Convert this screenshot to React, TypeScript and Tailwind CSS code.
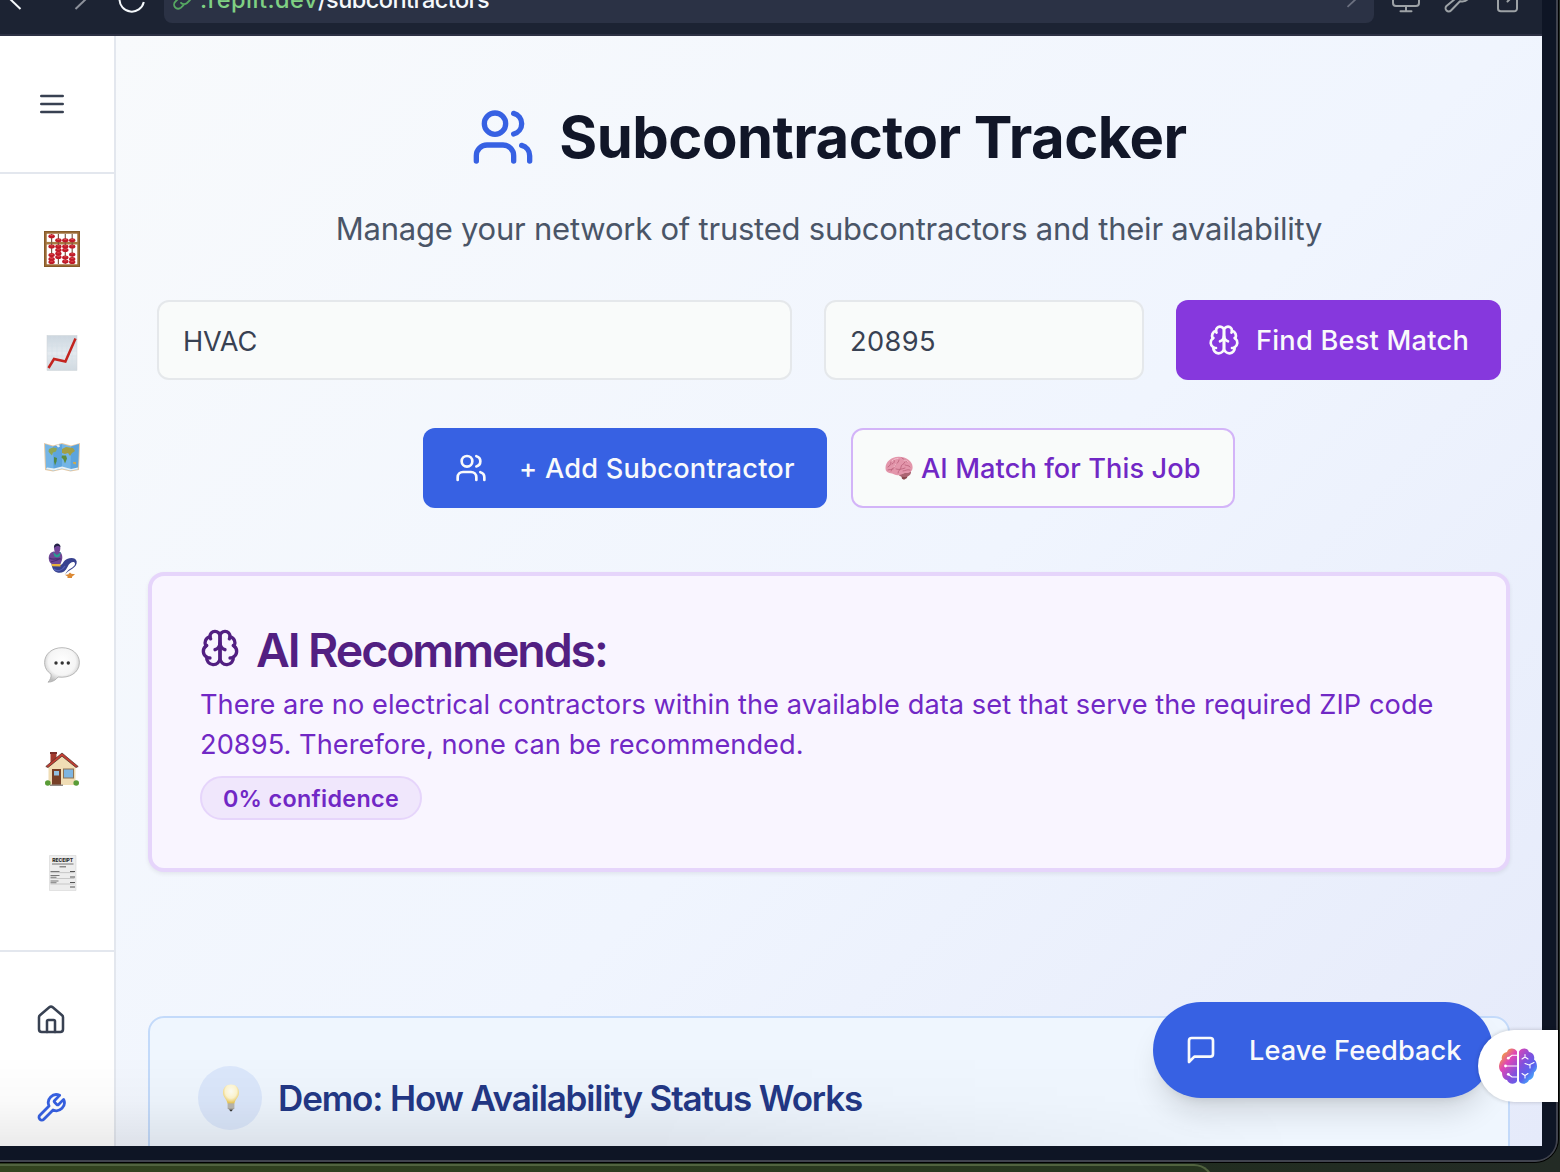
import React from "react";

type IconProps = { className?: string; stroke?: number };

function Icon({ className = "", stroke = 2, children }: IconProps & { children: React.ReactNode }) {
  return (
    <svg
      viewBox="0 0 24 24"
      fill="none"
      stroke="currentColor"
      strokeWidth={stroke}
      strokeLinecap="round"
      strokeLinejoin="round"
      className={`shrink-0 ${className}`}
    >
      {children}
    </svg>
  );
}

const UsersIcon = (p: IconProps) => (
  <Icon {...p}>
    <path d="M16 21v-2a4 4 0 0 0-4-4H6a4 4 0 0 0-4 4v2" />
    <circle cx="9" cy="7" r="4" />
    <path d="M22 21v-2a4 4 0 0 0-3-3.87" />
    <path d="M16 3.13a4 4 0 0 1 0 7.75" />
  </Icon>
);

const BrainIcon = (p: IconProps) => (
  <Icon {...p}>
    <path d="M12 5a3 3 0 1 0-5.997.125 4 4 0 0 0-2.526 5.77 4 4 0 0 0 .556 6.588A4 4 0 1 0 12 18Z" />
    <path d="M12 5a3 3 0 1 1 5.997.125 4 4 0 0 1 2.526 5.77 4 4 0 0 1-.556 6.588A4 4 0 1 1 12 18Z" />
    <path d="M15 13a4.5 4.5 0 0 1-3-4 4.5 4.5 0 0 1-3 4" />
    <path d="M17.599 6.5a3 3 0 0 0 .399-1.375" />
    <path d="M6.003 5.125A3 3 0 0 0 6.401 6.5" />
    <path d="M3.477 10.896a4 4 0 0 1 .585-.396" />
    <path d="M19.938 10.5a4 4 0 0 1 .585.396" />
    <path d="M6 18a4 4 0 0 1-1.967-.516" />
    <path d="M19.967 17.484A4 4 0 0 1 18 18" />
  </Icon>
);

const MenuIcon = (p: IconProps) => (
  <Icon {...p}>
    <path d="M4 6h16M4 12h16M4 18h16" />
  </Icon>
);

const HouseIcon = (p: IconProps) => (
  <Icon {...p}>
    <path d="M15 21v-8a1 1 0 0 0-1-1h-4a1 1 0 0 0-1 1v8" />
    <path d="M3 10a2 2 0 0 1 .709-1.528l7-5.999a2 2 0 0 1 2.582 0l7 5.999A2 2 0 0 1 21 10v9a2 2 0 0 1-2 2H5a2 2 0 0 1-2-2z" />
  </Icon>
);

const WrenchIcon = (p: IconProps) => (
  <Icon {...p}>
    <path d="M14.7 6.3a1 1 0 0 0 0 1.4l1.6 1.6a1 1 0 0 0 1.4 0l3.77-3.77a6 6 0 0 1-7.94 7.94l-6.91 6.91a2.12 2.12 0 0 1-3-3l6.91-6.91a6 6 0 0 1 7.94-7.94l-3.76 3.76z" />
  </Icon>
);

const MessageIcon = (p: IconProps) => (
  <Icon {...p}>
    <path d="M21 15a2 2 0 0 1-2 2H7l-4 4V5a2 2 0 0 1 2-2h14a2 2 0 0 1 2 2z" />
  </Icon>
);

/* Sidebar pictograms, all on a 36 unit canvas */

const abacusRods = [7.6, 14.4, 21.3, 28.2];
const abacusBeads: number[][] = [
  [5.2, 15.5, 24, 28, 31],
  [9.2, 15.5, 19, 22.5, 26],
  [9.2, 15.5, 19, 26.5, 30.5],
  [9.2, 15.5, 23.5, 28, 31],
];

const Abacus = () => (
  <svg viewBox="0 0 36 36" className="size-9">
    <rect x="1.3" y="1.3" width="33.4" height="33.4" fill="#fff" stroke="#9a6a35" strokeWidth="2.8" />
    <path d="M0.4 0.4h35.2v35.2H0.4z" fill="none" stroke="#7b5023" strokeWidth=".7" />
    <path d="M2 12.2h32" stroke="#a87a42" strokeWidth="2.6" />
    {abacusRods.map((x, i) => (
      <g key={x}>
        <path d={`M${x} 3v30`} stroke="#7e5a46" strokeWidth="1.2" />
        {abacusBeads[i].map((y) => (
          <g key={y}>
            <ellipse cx={x} cy={y} rx="3.2" ry="2" fill="#bf1a28" />
            <ellipse cx={x} cy={y - 0.7} rx="1.6" ry=".5" fill="#e04a4e" />
          </g>
        ))}
      </g>
    ))}
  </svg>
);

const Chart = () => (
  <svg viewBox="0 0 36 36" className="size-9">
    <defs>
      <linearGradient id="paper" x1="0" y1="0" x2="0" y2="1">
        <stop offset="0" stopColor="#ccd6df" />
        <stop offset=".5" stopColor="#e4eaef" />
        <stop offset="1" stopColor="#d0d9e0" />
      </linearGradient>
    </defs>
    <rect x="3" y=".5" width="30" height="35" fill="url(#paper)" stroke="#cdd3d8" strokeWidth=".5" />
    <path d="M8 1v34M13 1v34M18 1v34M23 1v34M28 1v34M3 6h30M3 11h30M3 16h30M3 21h30M3 26h30M3 31h30" stroke="#d3dce4" strokeWidth=".5" />
    <path d="M4.500 33 10 24l11.400 2.500L31.500 3.500" fill="none" stroke="#c3241f" strokeWidth="2.500" />
  </svg>
);

const WorldMap = () => (
  <svg viewBox="0 0 36 36" className="size-9">
    <path d="M0 4l9 2.500L18 4l9 2.500L36 4l-1 27-8.500 1.500-8.500-2-9 2L1 31z" fill="#e4c7a2" />
    <path d="M1 5l8 2.500L18 5l9 2.500L35 5l-1 25-7.500 1.500-8.500-2-8.500 2L2 30z" fill="#74b5e6" />
    <path d="M9 7.500L18 5v24.500l-8.500 2zM27 7.500L35 5l-1 25-7.500 1.500z" fill="#4f9ad6" opacity=".6" />
    <path d="M5 10l4-1.500 4 1-1 3-3 1-1 3-2-2-1.500-2z" fill="#8fa653" />
    <path d="M10 18l3 1-.5 3.500-1.500 4-1-4z" fill="#4f8845" />
    <path d="M18 10l4-2 7 1 2 3-3 2-2 3-2-3-3 1-3-1z" fill="#a39f45" />
    <path d="M18 16.500l4 0 1 3-2 5-1.500-4-2-2z" fill="#5d8d3d" />
    <path d="M29 23l3 0 0 2.500-3-1z" fill="#cda950" />
    <path d="M12 6l3-.5 1 2-2 1zM3 28.500l7 1 8-2 9 2.500 7-1.500-.3 1.700-7.200 1.300-8.500-2-8.500 2L2 30z" fill="#e8f1f5" />
  </svg>
);

const Genie = () => (
  <svg viewBox="0 0 36 36" className="size-9">
    <path d="M7.500 21C8.500 32 20 32.500 23.500 24c2-5 7.500-6.500 7.500-3 0 3.500-8 5-9.700 10.200C24 27 33.500 25 32.700 18.500 31.500 13 22.500 14.500 19.500 19c-1 1.800-2 3-3.500 3z" fill="#38428f" />
    <path d="M10 26c3 3 8 2 11-3" fill="none" stroke="#5663b8" strokeWidth="1.200" />
    <path d="M7.500 20l9 .5v3l-8.500-.3z" fill="#e9b23c" />
    <path d="M9.500 8.500c-3.500.8-5 4-4.700 7.500.2 3 2 4.500 3.200 5h8.500c1-3 2.500-5 1.500-9-.6-2.500-2-3.500-4-3.500z" fill="#6f4796" />
    <path d="M9 9l4 3 4-3-1.500 4.500-2.500 1-2.500-1z" fill="#2a9a93" />
    <path d="M5.500 15c3 2.500 7.500 0 11.500 1M7 19c3-1.500 5-.5 9-3.500" fill="none" stroke="#4b2d74" strokeWidth="1.200" />
    <ellipse cx="13.200" cy="5.600" rx="3.100" ry="4.200" fill="#72459a" />
    <path d="M10 5c-.8-6 7-6 6.500-.5-1-2-4-2.300-6.500.5z" fill="#252348" />
    <path d="M20.500 31.500c3 .8 4-.7 6-.7s3 .2 4.500.5l-3 2.400h-4zM26 29.500l1.500 1.500h-3zM23.500 33.800h4.500v1.200h-4.500z" fill="#dc8a35" />
  </svg>
);

const Speech = () => (
  <svg viewBox="0 0 36 36" className="size-9">
    <defs>
      <radialGradient id="bubble" cx=".5" cy=".4" r=".6">
        <stop offset="0" stopColor="#fff" />
        <stop offset=".65" stopColor="#f5f5f5" />
        <stop offset="1" stopColor="#bdbdbd" />
      </radialGradient>
    </defs>
    <path d="M18 .7C8 .7.6 7 .6 15.500c0 5 2.400 9 6.400 11.500.5 3-.8 6-3 8.200 4 0 8-2.200 10-5.200 11 1.500 21.400-4 21.400-14.500C35.400 7 28 .7 18 .7z" fill="url(#bubble)" stroke="#a9a9a9" strokeWidth=".8" />
    <g fill="#333">
      <circle cx="12" cy="16" r="1.700" />
      <circle cx="18.200" cy="16" r="1.700" />
      <circle cx="24.300" cy="16" r="1.700" />
    </g>
  </svg>
);

const Cottage = () => (
  <svg viewBox="0 0 36 36" className="size-9">
    <rect x="6.500" y="1" width="6" height="13" fill="#a2392d" />
    <path d="M6 1h7v2H6z" fill="#7c2d28" />
    <path d="M4.500 16L18 3.500 31.500 16v18h-27z" fill="#f0ddb5" />
    <path d="M1.800 15.500L18 2l16.200 13.500-2.200 1L18 5.200 4 16.500z" fill="#c53d32" stroke="#57352c" strokeWidth=".8" />
    <rect x="8" y="18" width="9" height="16" fill="#774027" />
    <rect x="10" y="20" width="5" height="4.500" fill="#92c1e2" />
    <rect x="19.500" y="18" width="10" height="9" fill="#7eb5e1" stroke="#8d7355" strokeWidth="1" />
    <path d="M6 33.500h13V35H6z" fill="#938d88" />
    <circle cx="3.800" cy="32" r="2.800" fill="#5a9c37" />
    <circle cx="32.200" cy="32" r="2.800" fill="#5a9c37" />
  </svg>
);

const Receipt = () => (
  <svg viewBox="0 0 36 36" className="size-9">
    <path d="M5.500.5h26.500v35H5.500z" fill="#ededed" stroke="#cfcfcf" strokeWidth=".5" />
    <text x="18.700" y="7.200" textAnchor="middle" fontSize="5.400" fontWeight="800" textLength="21" lengthAdjust="spacingAndGlyphs" fontFamily="Inter, sans-serif" fill="#2a2a2a">RECEIPT</text>
    <path d="M8 9h21.500" stroke="#555" strokeWidth=".8" />
    <path d="M15.500 11.800h6.500" stroke="#666" strokeWidth="1.100" />
    <path d="M6.500 16.500h9M6.500 20.500h9M6.500 22.300h6M6.500 26h8M6.500 27.800h6" stroke="#777" strokeWidth="1.100" />
    <path d="M26 16.500h5M26 22h5M26 27.500h5M26 32h5" stroke="#555" strokeWidth="1.200" />
    <path d="M6.500 17.600h24M6.500 23.500h24M6.500 29h24" stroke="#a3a3a3" strokeWidth=".5" />
  </svg>
);

const Bulb = () => (
  <svg viewBox="0 0 20 30" className="h-[30px] w-5">
    <defs>
      <radialGradient id="glow" cx=".5" cy=".35" r=".6">
        <stop offset="0" stopColor="#fffef5" />
        <stop offset=".6" stopColor="#fff6cf" />
        <stop offset="1" stopColor="#ebc95c" />
      </radialGradient>
    </defs>
    <path d="M10 1.500C5 1.500 2 5 2 9.500c0 5 4 6.500 4.600 11.300h6.800C14 16 18 14.500 18 9.500c0-4.500-3-8-8-8z" fill="url(#glow)" />
    <path d="M6.700 20.500h6.600v4.700l-1.300 1.500H8l-1.300-1.500z" fill="#aaa69d" />
    <path d="M6.700 22h6.600M6.700 24h6.600" stroke="#d9d6cd" strokeWidth=".7" />
    <path d="M8.200 26.500h3.600l-1 1.700H9.200z" fill="#3d3d3d" />
  </svg>
);

const PinkBrain = () => (
  <svg viewBox="0 0 28 24" className="h-6 w-7 shrink-0">
    <path d="M16 19l7-2-1 5-3 1.700-2-1z" fill="#8a4a50" />
    <path d="M13 18c4-1 10-1 13-3 .5 4-3 6-7 6-3 0-5-1-6-3z" fill="#ab6572" />
    <path d="M.5 12C.5 6 6 1 13.500.8 21 .6 27.500 5 27.600 11c.1 4-2.600 6-6.600 6-3 0-4 2-8 2.200-3 .1-4-1.200-6-1.700C3 16.800.500 16 .500 12z" fill="#e396ab" />
    <path d="M3 11c2-1 3-3 3-5M6 15c0-3 3-2 4-5s3-2 4-6M9 4c1 2 0 3-2 4M13 17c0-3 3-3 3-6s3-2 4-5M17 2c1 2 4 1 5 4M11 13c3 1 6 0 9-1M20 9c2 1 4 0 5 2M18 15c2 0 4-2 7-1M3 14c2 0 3-1 5-1" fill="none" stroke="#b96078" strokeWidth=".8" strokeLinecap="round" />
    <path d="M7 5c2-2 4-2.500 6-2.500M19 4c2 0 3 1 4 2M9 11c1-1 1-2 2-3" fill="none" stroke="#f4bfcc" strokeWidth="1" strokeLinecap="round" />
  </svg>
);

const NeonBrain = () => (
  <svg viewBox="0 0 38 36" className="h-9 w-[38px]">
    <defs>
      <linearGradient id="neon" x1="3" y1="5" x2="35" y2="31" gradientUnits="userSpaceOnUse">
        <stop offset="0" stopColor="#f2a23c" />
        <stop offset=".24" stopColor="#e046b4" />
        <stop offset=".55" stopColor="#8450dc" />
        <stop offset=".78" stopColor="#5a62ee" />
        <stop offset="1" stopColor="#44b4fb" />
      </linearGradient>
    </defs>
    <path d="M18 3.500C16-.5 9-.5 8 4 4 4.500 2 8 3 11.500.5 13 0 18 0 18.500c0 3 1.500 5 3 6C3 29 5 31.500 8 32c1.500 4.500 8.500 5 10 1z" fill="url(#neon)" />
    <path d="M20 3.500C22-.5 29-.5 30 4c4 .5 6 4 5 7.500 2.500 1.500 3 5.500 3 7 0 3-1.500 5-3 6 0 4.500-2 7-5 7.500-1.500 4.500-8.500 5-10 1z" fill="url(#neon)" />
    <g fill="none" stroke="#fff" strokeWidth="1.100" strokeLinecap="round">
      <path d="M18 7.300h-5L9.500 10M18 18H7M18 29h-5l-3.500-2.500" />
      <path d="M23 11l3-2 3 2M26 9V6.500M26 15.500l4 1.500 5-2.500M31 17v3M23 25.500l3 2 3-2M26 27.500V30" />
    </g>
    <circle cx="9.300" cy="10.200" r="1.400" fill="#fff" />
    <circle cx="6.500" cy="18" r="1.400" fill="#fff" />
    <circle cx="9.300" cy="26.300" r="1.400" fill="#fff" />
  </svg>
);

const navItems = [Abacus, Chart, WorldMap, Genie, Speech, Cottage, Receipt];

function BrowserBar() {
  return (
    <header className="flex h-9 shrink-0 items-start border-b-2 border-[#2d3144] bg-[#1c2333]">
      <svg viewBox="0 0 164 34" className="h-[34px] w-[164px] shrink-0" fill="none" strokeWidth="2">
        <path d="M9 -2 20.500 9" stroke="#f5f9fc" />
        <path d="M87 -2 75.500 9" stroke="#8d919b" />
        <path d="M119.500 -1a12.300 12.300 0 0 0 24.300 3" stroke="#f5f9fc" />
      </svg>
      <div className="flex h-[23px] w-[1210px] shrink-0 items-start justify-between overflow-hidden rounded-b-lg bg-[#2b3245]">
        <div className="flex items-start">
          <svg viewBox="0 0 36 23" className="h-[23px] w-9" fill="none" stroke="#56a862" strokeWidth="1.800" strokeLinecap="round">
            <path d="M15.500 -2.500 11.500 1.500a4.100 4.100 0 0 0 5.500 6.200l2.500-2.500M17 2.800a4.200 4.200 0 0 0 6 .2L26 0" />
          </svg>
          <span className="-mt-[14px] whitespace-nowrap text-[23.500px]/[28px] font-medium tracking-[-0.550px] text-[#f5f9fc]">
            <span className="tracking-[0.500px] text-[#7fd083]">.replit.dev</span>/subcontractors
          </span>
        </div>
        <svg viewBox="0 0 30 23" className="h-[23px] w-[30px]" fill="none" stroke="#6c7180" strokeWidth="1.800">
          <path d="M12 -1 3.500 6.800" />
        </svg>
      </div>
      <svg viewBox="0 0 168 34" className="h-[34px] w-[168px]" fill="none" stroke="#9da2a6" strokeWidth="2" strokeLinecap="round" strokeLinejoin="round">
        <path d="M19 -3v6a3 3 0 0 0 3 3h20a3 3 0 0 0 3-3v-6M32 6.500v4.500M26.500 11.300h11" />
        <path d="M81 -1 72.500 6a3 3 0 0 0 4.500 4.500L86 1.200c4 .8 7-.5 8.500-3" />
        <path d="M124 -3V8.500a2.800 2.800 0 0 0 2.800 2.800h13.400a2.800 2.800 0 0 0 2.800-2.800V-3M137 -2l-3.500 3.500" />
      </svg>
    </header>
  );
}

function Sidebar() {
  return (
    <aside className="flex w-[116px] shrink-0 flex-col border-r-2 border-[#e3e7ee] bg-white">
      <div className="flex h-[138px] shrink-0 items-center border-b-2 border-[#e3e7ee] pl-9 text-[#384152]">
        <MenuIcon className="size-8" />
      </div>
      <nav className="flex h-[778px] shrink-0 flex-col border-b-2 border-[#e3e7ee] pt-[23px]">
        {navItems.map((Glyph, i) => (
          <div key={i} className="flex h-[104px] items-center justify-center pl-[10px]">
            <Glyph />
          </div>
        ))}
      </nav>
      <div className="flex flex-col gap-14 pt-[52px] pl-[35px]">
        <HouseIcon className="size-8 text-[#384152]" stroke={1.9} />
        <WrenchIcon className="size-8 text-[#3761e3]" stroke={2.1} />
      </div>
    </aside>
  );
}

function Hero() {
  return (
    <section className="flex flex-col items-center">
      <div className="flex items-center gap-6">
        <UsersIcon className="size-16 text-[#3761e3]" />
        <h1 className="whitespace-nowrap text-[58px]/[74px] font-bold tracking-[-0.530px] text-[#111628]">Subcontractor Tracker</h1>
      </div>
      <p className="mt-[30px] h-12 whitespace-nowrap text-[31px]/[50px] tracking-[-0.230px] text-[#4a5567]">
        Manage your network of trusted subcontractors and their availability
      </p>
      <div className="mt-12 flex gap-8">
        <div className="flex h-20 w-[635px] items-center rounded-xl border-2 border-[#e5e8eb] bg-[#f9fbfa] px-6 pt-1 text-[27.200px] tracking-[-0.150px] text-[#384152]">HVAC</div>
        <div className="flex h-20 w-80 items-center rounded-xl border-2 border-[#e5e8eb] bg-[#f9fbfa] px-6 pt-1 text-[27.200px] tracking-[0.400px] text-[#384152]">20895</div>
        <button className="flex h-20 w-[325px] items-center gap-4 whitespace-nowrap rounded-xl bg-[#8638dd] pl-8 text-[27.200px] tracking-[0.230px] text-[#f9fafb]">
          <BrainIcon className="size-8" />
          <span className="pt-[3px] font-[450]">Find Best Match</span>
        </button>
      </div>
      <div className="mt-12 flex gap-6">
        <button className="flex h-20 w-[404px] items-center gap-8 whitespace-nowrap rounded-xl bg-[#3761e3] pl-8 text-[27.200px] tracking-[0.240px] text-[#f9fafb]">
          <UsersIcon className="size-8" />
          <span className="pt-[3px] font-[450]">+ Add Subcontractor</span>
        </button>
        <button className="flex h-20 w-96 items-center gap-2 whitespace-nowrap rounded-xl border-2 border-[#d3b4f8] bg-[#f9fbfa] pl-8 text-[27.200px] font-[480] tracking-[0.080px] text-[#7128c5]">
          <PinkBrain />
          <span className="pt-[3px]">AI Match for This Job</span>
        </button>
      </div>
    </section>
  );
}

function Recommendation() {
  return (
    <section className="mt-16 h-[300px] shrink-0 rounded-2xl border-4 border-[#e6d5fb] bg-[#f9f5ff] px-12 pt-12 shadow-[0_2px_4px_rgba(0,0,0,0.07)]">
      <div className="flex h-[60px] items-start gap-4 text-[#521f82]">
        <BrainIcon className="mt-1 size-10" />
        <h2 className="-mt-[2px] whitespace-nowrap text-[46.500px]/[56px] font-semibold tracking-[-2.100px]">AI Recommends:</h2>
      </div>
      <p className="mt-px whitespace-nowrap text-[27.200px]/[40px] tracking-[0.055px] text-[#7128c5]">
        There are no electrical contractors within the available data set that serve the required ZIP code
        <br />
        20895. Therefore, none can be recommended.
      </p>
      <span className="mt-[11px] flex h-11 w-[222px] items-center justify-center rounded-full border-2 border-[#e6d5fb] bg-[#f0e7fc] pt-0.5 text-[23.300px] font-semibold tracking-[0.330px] text-[#7128c5]">
        0% confidence
      </span>
    </section>
  );
}

function DemoCard() {
  return (
    <section className="mt-36 h-[300px] shrink-0 rounded-2xl border-2 border-[#c3dafa] bg-[#eff6fe] px-12 pt-12">
      <div className="flex h-16 items-center gap-4">
        <div className="flex size-16 items-center justify-center rounded-full bg-[#dbe7fb] pl-0.5">
          <Bulb />
        </div>
        <h2 className="whitespace-nowrap text-[35px]/[64px] font-semibold tracking-[-1.130px] text-[#233886]">Demo: How Availability Status Works</h2>
      </div>
    </section>
  );
}

export default function App() {
  return (
    <div className="relative h-[1172px] w-[1560px] overflow-hidden bg-gradient-to-r from-[#2c3a20] via-[#1f2f1a] to-[#232b25] font-['Inter',sans-serif]">
      {/* neighbouring window peeking out below the browser */}
      <div className="absolute -bottom-4 left-0 h-6 w-[1214px] rounded-tr-[20px] border-t-2 border-r-2 border-[#51633f] bg-gradient-to-r from-[#33441f] to-[#26351f]" />
      <div className="relative h-[1163px] w-[1559px] overflow-hidden rounded-br-[24px] border-r border-b border-black">
        <div className="flex h-[1162px] w-[1558px] flex-col overflow-hidden rounded-br-[22px] border-r-2 border-b-2 border-[#40434e] bg-[#0e1525]">
          <div className="flex h-[1146px] w-[1542px] shrink-0 flex-col overflow-hidden">
            <BrowserBar />
            <div className="flex min-h-0 flex-1">
              <Sidebar />
              <main className="flex min-w-0 flex-1 flex-col overflow-hidden bg-linear-135 from-[#f8fafc] via-[#f0f5fe] via-55% to-[#e5eafa] pt-16 pr-8 pl-8">
                <Hero />
                <Recommendation />
                <DemoCard />
              </main>
            </div>
          </div>
        </div>
      </div>
      {/* shade that darkens the lower edge of the page */}
      <div className="pointer-events-none absolute top-[1056px] left-0 h-[90px] w-[1300px] bg-gradient-to-b from-black/0 via-black/2 to-black/8 mask-r-from-50% mask-r-to-100%" />
      <button className="absolute top-[1002px] left-[1153px] flex h-24 w-[340px] items-center gap-8 whitespace-nowrap rounded-full bg-[#3761e3] pl-8 text-[27.200px] font-[450] tracking-[0.020px] text-[#f9fafb] shadow-[0_20px_30px_-6px_rgba(0,0,0,0.13),0_8px_12px_-8px_rgba(0,0,0,0.12)]">
        <MessageIcon className="size-8" />
        <span className="pt-[3px]">Leave Feedback</span>
      </button>
      <div className="absolute top-[1030px] left-[1478px] flex h-[72px] w-20 items-center rounded-l-full bg-white pl-[21px] shadow-[0_0_4px_rgba(0,0,0,0.2)]">
        <NeonBrain />
      </div>
    </div>
  );
}
